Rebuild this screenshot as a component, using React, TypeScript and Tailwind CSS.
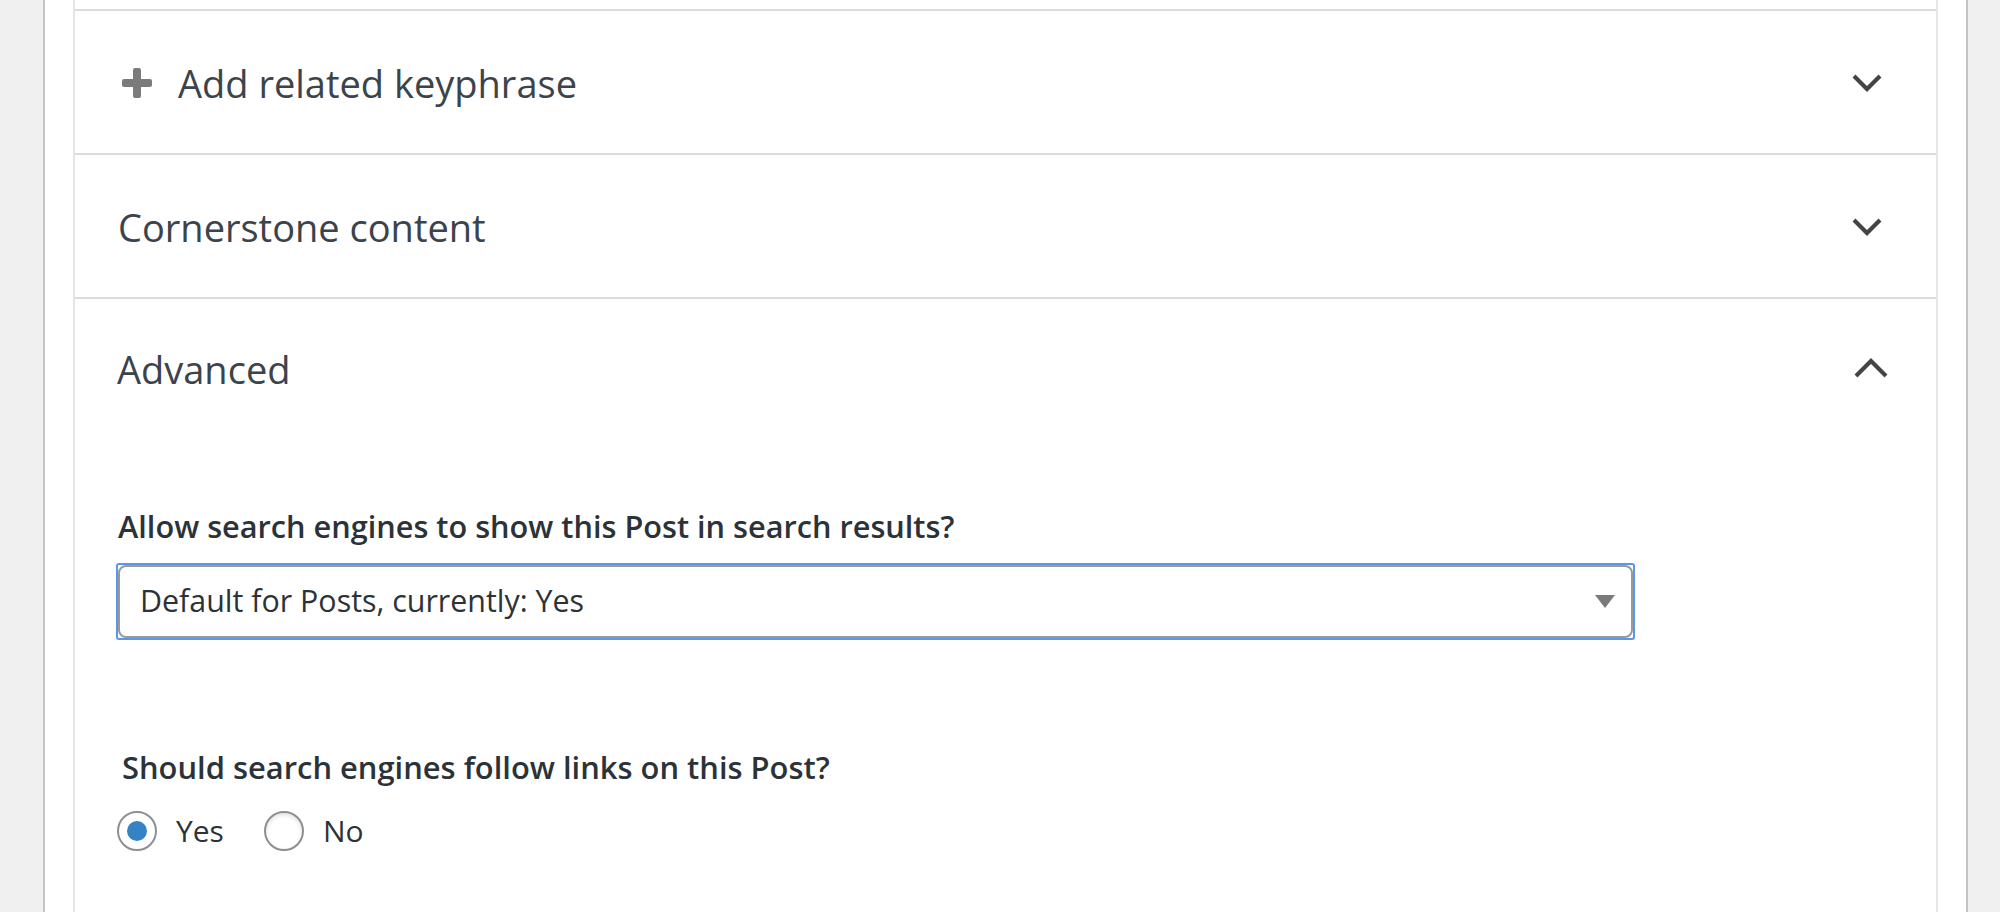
import { useState } from 'react';

function Chevron({ up = false }: { up?: boolean }) {
  if (up) {
    return (
      <svg width="34" height="20" viewBox="0 0 34 20" fill="none">
        <polyline points="2,18 17,3 32,18" stroke="#444" strokeWidth="4.2" />
      </svg>
    );
  }
  return (
    <svg width="30" height="18" viewBox="0 0 30 18" fill="none">
      <polyline points="2,2 15,15 28,2" stroke="#444" strokeWidth="4.2" />
    </svg>
  );
}

function PlusIcon() {
  return (
    <svg width="32" height="32" viewBox="0 0 32 32">
      <rect x="12" y="1" width="8" height="30" rx="2" fill="#7b7b7b" />
      <rect x="1" y="12" width="30" height="8" rx="2" fill="#7b7b7b" />
    </svg>
  );
}

function Radio({ checked, label, onClick }: { checked: boolean; label: string; onClick: () => void }) {
  return (
    <label className="flex items-center cursor-pointer" onClick={onClick}>
      <span
        className={`w-[40px] h-[40px] rounded-full border-2 border-[#8c8f94] flex items-center justify-center bg-white ${
          checked ? '' : 'shadow-[inset_0_2px_4px_rgba(0,0,0,0.12)]'
        }`}
      >
        {checked && <span className="w-[20px] h-[20px] rounded-full bg-[#3582c4]" />}
      </span>
      <span className="ml-[19px] text-[30px] leading-none text-[#2c3338]">{label}</span>
    </label>
  );
}

export default function App() {
  const [follow, setFollow] = useState(true);

  return (
    <div className="min-h-screen h-[912px] overflow-hidden bg-[#f0f0f1] pl-[43px] pr-[32px] font-['Open_Sans',sans-serif]">
      <div className="h-full bg-white border-x-2 border-[#c3c4c7] px-[28px]">
        <div className="h-full border-x-2 border-[#e4e5e7]">
          <div className="h-[9px]" />

          {/* Related keyphrase */}
          <div className="border-t-2 border-[#dcdcde] h-[144px] flex items-center pt-[2px] pl-[46px] pr-[47px]">
            <PlusIcon />
            <span className="ml-[25px] text-[38px] leading-none text-[#3c434a]">Add related keyphrase</span>
            <span className="ml-auto w-[44px] flex justify-center">
              <Chevron />
            </span>
          </div>

          {/* Cornerstone */}
          <div className="border-t-2 border-[#dcdcde] h-[144px] flex items-center pt-[2px] pl-[43px] pr-[47px]">
            <span className="text-[38px] leading-none text-[#3c434a]">Cornerstone content</span>
            <span className="ml-auto w-[44px] flex justify-center">
              <Chevron />
            </span>
          </div>

          {/* Advanced */}
          <div className="border-t-2 border-[#dcdcde]">
            <div className="h-[138px] flex items-center pt-[2px] pl-[42px] pr-[43px]">
              <span className="text-[38px] leading-none text-[#3c434a]">Advanced</span>
              <span className="ml-auto w-[44px] flex justify-center -mt-[3px]">
                <Chevron up />
              </span>
            </div>

            <div className="pl-[41px] pt-[68px]">
              <div className="pl-[2px] text-[30.7px] leading-[1.4] font-semibold text-[#2c3338]">
                Allow search engines to show this Post in search results?
              </div>
              <div className="mt-[15px] w-[1519px] h-[77px] border-2 border-[#5b95ec] rounded-[3px]">
                <div className="h-full border-2 border-[#9a9a9a] rounded-[8px] flex items-center pl-[20px] pr-[16px]">
                  <span className="text-[30.4px] leading-none text-[#2c3338]">Default for Posts, currently: Yes</span>
                  <svg className="ml-auto" width="20" height="13" viewBox="0 0 20 13">
                    <polygon points="0,0 20,0 10,13" fill="#7a7a7a" />
                  </svg>
                </div>
              </div>

              <div className="mt-[106px] pl-[6px] text-[30.9px] leading-[1.4] font-semibold text-[#2c3338]">
                Should search engines follow links on this Post?
              </div>
              <div className="mt-[22px] flex items-center gap-[40px] pl-[1px]">
                <Radio checked={follow} label="Yes" onClick={() => setFollow(true)} />
                <Radio checked={!follow} label="No" onClick={() => setFollow(false)} />
              </div>
            </div>
          </div>
        </div>
      </div>
    </div>
  );
}
